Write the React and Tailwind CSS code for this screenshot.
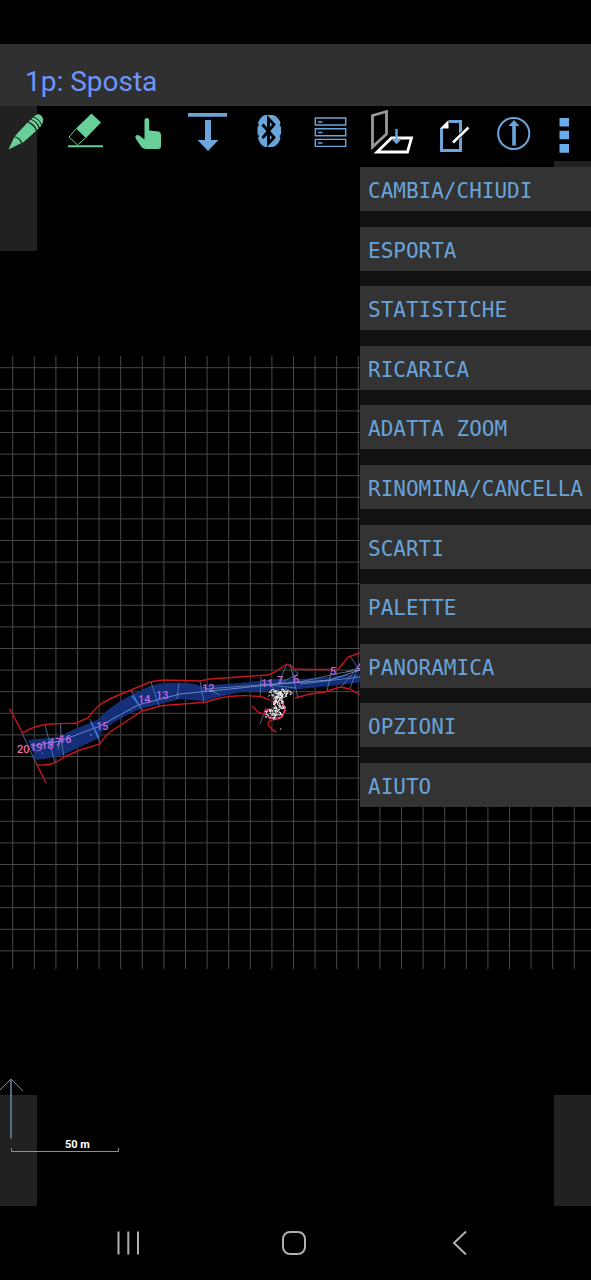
import React from "react";

const BLUE = "#6aa5dc";
const GREEN = "#68cf98";

const tools = [
  {
    name: "Disegna",
    box: "0 106 61 55",
    art: (
      <g fill={GREEN}>
        <path d="M8.500 149.500 14 137.500Q18 137 21 143L20.500 143.500Z" />
        <path d="M14.500 136.500 27.500 122.500Q34 125 36 131L22.500 143Q20 137 14.500 136.500Z" />
        <path d="M28.500 121.500 30.500 119.800Q37 122 38.800 128.200L37 130Q35 124 28.500 121.500Z" />
        <path d="M31.300 119 33 117.500Q39.500 119.500 41.300 125.700L39.600 127.400Q37.500 121.500 31.300 119Z" />
        <path d="M33.800 116.700 36 115Q38.500 113.500 41 115.500 43.500 117.500 43 121 42.800 123.500 42 124.800 39.500 119 33.800 116.700Z" />
      </g>
    ),
  },
  {
    name: "Cancella",
    box: "61 106 61 55",
    art: (
      <g>
        <path d="M91.500 113.500 101 122.500 86 138 76 128.500Z" fill={GREEN} />
        <path d="M76 129 69 137 77.500 145 85.500 138" fill="none" stroke={GREEN} />
        <path d="M68 146.200H103" stroke={GREEN} strokeWidth="2" />
      </g>
    ),
  },
  {
    name: "Seleziona",
    box: "122 106 61 55",
    art: (
      <path
        d="M144.500 120Q144.500 118 146.800 118T149.200 120V130.500L159 131.500Q161 132.500 161 135V146Q161 149 158 149H146Q143.500 149 141.500 147L136 139Q134.500 136.500 136.500 135.300 138 134.500 140 136L144.500 139.500Z"
        fill={GREEN}
      />
    ),
  },
  {
    name: "Scarica",
    box: "183 106 61 55",
    art: (
      <path d="M188 113H227V116.700H188ZM205 120H211V140H218.500L208 151 197.500 140H205Z" fill={BLUE} />
    ),
  },
  {
    name: "Bluetooth",
    box: "244 106 61 55",
    art: (
      <g>
        <path
          d="M265 115H273Q279 117 280.500 123.500L279.500 125 281 127V134L279.500 136 280.500 138Q279 144.500 273 147H265Q259.500 144.500 258 138L259 136 257.500 134V127L259 125 258 123.500Q259.500 117 265 115Z"
          fill={BLUE}
        />
        <path d="M262.500 124.500 274 137.500 268.500 143.500V118.500L274 124.500 262.500 138" fill="none" stroke="#000" strokeWidth="2.800" />
      </g>
    ),
  },
  {
    name: "Elenco",
    box: "305 106 61 55",
    art: (
      <g fill="none" stroke={BLUE} strokeWidth="1.400">
        <path d="M315.300 118H345.700V125H315.300ZM315.300 128.700H345.700V135.700H315.300ZM315.300 139.400H345.700V146.400H315.300Z" />
        <path d="M318 122H322.500M318 132.500H322.500M318 143H322.500" />
      </g>
    ),
  },
  {
    name: "Proiezione",
    box: "366 106 61 55",
    art: (
      <g fill="none">
        <path d="M372.500 115.500 386.500 111.500V134L372.500 147Z" stroke="#999" strokeWidth="2.800" />
        <path d="M391.500 138H411.500L407.500 152H377Z" stroke="#fff" strokeWidth="2.800" />
        <path d="M396.500 129V142M392.500 138.500 396.500 142.500 400.500 138.500" stroke={BLUE} strokeWidth="2.400" />
      </g>
    ),
  },
  {
    name: "Nota",
    box: "427 106 61 55",
    art: (
      <g fill="none">
        <path d="M449 121.500H460.500V150.500H441.500V128" stroke={BLUE} strokeWidth="3" />
        <path d="M448.500 120V128.500H440Z" fill="#fff" />
        <path d="M453 142.500 468.500 127.500" stroke="#000" strokeWidth="4" />
        <path d="M453 142.500 468.500 127.500" stroke="#fff" strokeWidth="2.600" />
      </g>
    ),
  },
  {
    name: "Nord",
    box: "488 106 61 55",
    art: (
      <g fill="none" stroke={BLUE}>
        <circle cx="513.700" cy="133.500" r="15.600" strokeWidth="2" />
        <path d="M514 145.500V123" strokeWidth="3.600" />
        <path d="M508.500 126 514 120 519.500 126Z" fill={BLUE} stroke="none" />
      </g>
    ),
  },
  {
    name: "Menu",
    box: "549 106 42 55",
    art: <path d="M559.500 118H569V126.500H559.500ZM559.500 130.700H569V139.300H559.500ZM559.500 144H569V152.700H559.500Z" fill="#67aeea" />,
  },
];

const menu = [
  "CAMBIA/CHIUDI",
  "ESPORTA",
  "STATISTICHE",
  "RICARICA",
  "ADATTA ZOOM",
  "RINOMINA/CANCELLA",
  "SCARTI",
  "PALETTE",
  "PANORAMICA",
  "OPZIONI",
  "AIUTO",
];

const columns = Array.from({ length: 27 }, (_, i) => 12.7 + i * 21.6);
const rows = Array.from({ length: 28 }, (_, i) => 367.7 + i * 21.6);

const stations = [
  ["20", 17, 753],
  ["19", 30, 751],
  ["18", 41, 749],
  ["17", 49, 746],
  ["16", 59, 743],
  ["15", 96, 730],
  ["14", 138, 703],
  ["13", 156, 699],
  ["12", 202, 692],
  ["11", 261, 687],
  ["7", 277, 684],
  ["6", 293, 683],
  ["5", 330, 675],
  ["4", 356, 671],
];

// Debris symbols scattered along the side passage: [x, y, radiusX, radiusY, count]
const debris = [
  [275, 694, 7, 4, 44],
  [285, 693.5, 8, 3.5, 46],
  [279, 699, 6, 5, 50],
  [279, 706, 6, 6, 60],
  [273, 714, 9, 5, 60],
];

function scatter() {
  let d = "";
  let seed = 7;
  const next = () => {
    seed = (seed * 16807) % 2147483647;
    return seed / 2147483647;
  };
  debris.forEach(([cx, cy, rx, ry, n]) => {
    for (let i = 0; i < n; i++) {
      const a = next() * Math.PI * 2;
      const r = Math.sqrt(next());
      const x = cx + Math.cos(a) * r * rx;
      const y = cy + Math.sin(a) * r * ry;
      d += `M${x.toFixed(1)} ${y.toFixed(1)}l${(next() * 4 - 2).toFixed(1)} ${(next() * 4 - 2).toFixed(1)}`;
    }
  });
  return d;
}

const debrisPath = scatter();

function SurveyMap() {
  return (
    <svg className="absolute inset-0 h-full w-full" role="img" aria-label="Pianta della grotta">
      <g transform="translate(0 -106)" fill="none">
        <g stroke="#484848" strokeWidth="1">
          {columns.map((x) => (
            <line key={x} x1={x} x2={x} y1="356" y2="969" />
          ))}
          {rows.map((y) => (
            <line key={y} x1="0" x2="100%" y1={y} y2={y} />
          ))}
        </g>
        <path
          d="M28 740 58 737 75 729 92 722 97 720Q110 706 131 695L150 686 158 684Q178 681 195 684L203 687 212 685 240 683 275 679 300 679 330 677 345 675 362 674V682L330 686 300 689 260 691 240 692 215 698 203 701 180 699 160 704 140 709Q118 718 102 731L99 738 80 747 63 755 50 758 36 760Z"
          fill="#142f78"
        />
        <path
          d="M22 733 37 765M45 725 55 763M60.500 724 61 738 64 757M90 719 100 743M131 690 142 711M151 682 159 706M179 683 177 699M200 681 204 702M261 677 260 697M287 664 278 684 298 674 290 664 298 698M332 668 327 691M350 656 358 668 340 688M358 668 346 672M358 668 350 688M260 724 266 708M61 738 58 750M30 746 38 752M203 687 220 695M260 684 296 688M268 680 276 692"
          stroke="#5b82b8"
          strokeWidth="0.800"
        />
        <path d="M32 746 60 741 92 729 98 727 138 705 180 694 240 688 278 684 330 680 360 670" stroke="#7d9fd8" strokeWidth="0.800" />
        <path d="M205 689 260 685 300 682 340 673 360 670M300 684 360 677" stroke="#8ba7cf" strokeWidth="0.600" />
        <path d="M91 722 99 738M132 696 140 706M42 753h1M90 735h2M121 717h1M355 677h1" stroke="#3d72d8" strokeWidth="1.600" />
        <g stroke="#c4161c" strokeWidth="1.400">
          <path d="M9.500 708.500 22.500 733Q35 725 50 724T75 723.500L88 718Q94 709 101 704T131 690L150 682Q158 680 166 680L200 681 210 679Q235 677 268 675L275 672 287 664 294 669 310 669.500 338 669.500 348 657 360 653" />
          <path d="M46 783 37 765Q50 766 58 761T64 757L80 750 100 744Q104 737 110 732L142 711 160 706Q180 704 190 703.500L206 702Q220 697 235 696T262 697L270 700M295 698 310 694 325 692 340 687 350 689 360 695" />
          <path d="M252 706 258 712 266 715M272 720Q266 722 269 726T276 732" />
        </g>
        <path d="M264 712 270 709M268 717 276 719 282 717 285 710 283 704M274 705 277 699" stroke="#e02a62" strokeWidth="2" />
        <path d={debrisPath} stroke="#f4f4f4" strokeWidth="1" />
        <path d="M280 729h1.200" stroke="#fff" strokeWidth="1.200" />
        <g className="font-['Roboto',sans-serif] text-[11px] font-medium" fill="#bd68e0">
          {stations.map(([label, x, y]) => (
            <text key={label} x={x} y={y} fill={label === "20" ? "#ef6aa6" : undefined}>
              {label}
            </text>
          ))}
        </g>
      </g>
    </svg>
  );
}

function ScaleBar() {
  return (
    <svg className="absolute bottom-0 left-0 h-[136px] w-[140px]" viewBox="0 1070 140 136" role="img" aria-label="Scala 50 m">
      <path d="M11 1080V1138.500" stroke="#64809c" strokeWidth="1.600" />
      <path d="M0 1090 11 1079 23 1091" fill="none" stroke="#999" strokeWidth="0.900" />
      <path d="M11.500 1148V1151.500H118.500V1148" fill="none" stroke="#8f8f8f" />
      <text x="65" y="1148" fill="#fff" className="font-['Roboto',sans-serif] text-[11px] font-bold">
        50 m
      </text>
    </svg>
  );
}

export default function App() {
  return (
    <div className="flex min-h-screen flex-col bg-black font-['Roboto',sans-serif]">
      <header className="mt-11 flex h-[62px] items-end bg-[#303030] px-[25px] pb-[7px]">
        <h1 className="text-[28px] leading-[34px] text-[#6f95fb]">1p: Sposta</h1>
      </header>

      <main className="relative min-h-[720px] flex-1">
        <div className="absolute top-0 left-0 h-[145px] w-[37px] bg-[#212121]" />
        <div className="absolute top-[55px] right-0 h-[90px] w-[37px] bg-[#212121]" />
        <div className="absolute bottom-0 left-0 h-[111px] w-[37px] bg-[#212121]" />
        <div className="absolute right-0 bottom-0 h-[111px] w-[37px] bg-[#212121]" />
        <SurveyMap />
        <ScaleBar />

        <div className="relative flex" role="toolbar" aria-label="Strumenti">
          {tools.map((tool) => (
            <button key={tool.name} type="button" aria-label={tool.name} className="h-[55px] w-[61px] shrink-0 last:w-[42px]">
              <svg viewBox={tool.box} className="h-full w-full" aria-hidden="true">
                {tool.art}
              </svg>
            </button>
          ))}
        </div>

        <nav className="absolute top-[61px] right-0 flex h-[640px] w-[231px] flex-col justify-between bg-[#111111]">
          {menu.map((label) => (
            <button
              key={label}
              type="button"
              className="h-11 bg-[#333333] px-2 pt-1 text-left font-['DejaVu_Sans_Mono',monospace] text-[21px] leading-6 whitespace-nowrap text-[#69a3da]"
            >
              {label}
            </button>
          ))}
        </nav>
      </main>

      <footer className="flex h-[74px] items-center pr-12 pl-[45px]">
        <button type="button" aria-label="Recenti" className="flex flex-1 justify-center">
          <svg viewBox="0 0 24 24" className="size-6" fill="none" stroke="#b0b0b0" strokeWidth="2">
            <path d="M2.500 .5V23.500M12.300 .5V23.500M22 .5V23.500" />
          </svg>
        </button>
        <button type="button" aria-label="Home" className="flex flex-1 justify-center">
          <svg viewBox="0 0 24 24" className="size-6" fill="none" stroke="#b0b0b0" strokeWidth="2">
            <rect x="1" y="1" width="22" height="22" rx="7" />
          </svg>
        </button>
        <button type="button" aria-label="Indietro" className="flex flex-1 justify-center">
          <svg viewBox="0 0 24 24" className="size-6" fill="none" stroke="#b0b0b0" strokeWidth="2">
            <path d="M18 .5 6 12 18 23.500" />
          </svg>
        </button>
      </footer>
    </div>
  );
}
